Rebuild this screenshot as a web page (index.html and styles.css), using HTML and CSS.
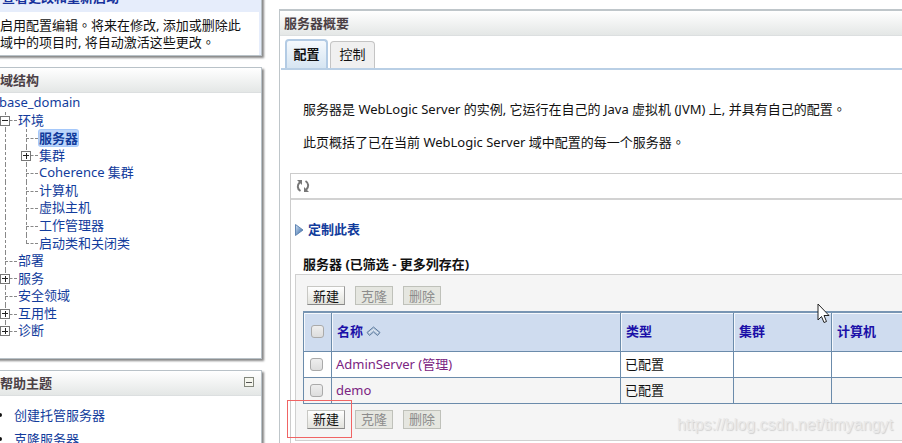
FILE: index.html
```html
<!DOCTYPE html>
<html lang="zh-CN">
<head>
<meta charset="utf-8">
<title>服务器概要</title>
<link rel="stylesheet" href="styles.css">
</head>
<body>
<div class="layout">
  <aside class="sidebar">
    <section class="panel changes">
      <h2>查看更改和重新启动</h2>
      <p>启用配置编辑。将来在修改, 添加或删除此域中的项目时, 将自动激活这些更改。</p>
    </section>
    <section class="panel domain">
      <h2 class="bar">域结构</h2>
      <ul class="tree">
        <li><a href="#">base_domain</a></li>
        <li><span class="joint"><button class="toggle" aria-label="折叠"></button></span><a href="#">环境</a></li>
        <li><span class="rail"></span><span class="joint"></span><a class="current" href="#">服务器</a></li>
        <li><span class="rail"></span><span class="joint"><button class="toggle plus" aria-label="展开"></button></span><a href="#">集群</a></li>
        <li><span class="rail"></span><span class="joint"></span><a href="#">Coherence 集群</a></li>
        <li><span class="rail"></span><span class="joint"></span><a href="#">计算机</a></li>
        <li><span class="rail"></span><span class="joint"></span><a href="#">虚拟主机</a></li>
        <li><span class="rail"></span><span class="joint"></span><a href="#">工作管理器</a></li>
        <li><span class="rail"></span><span class="joint end"></span><a href="#">启动类和关闭类</a></li>
        <li><span class="joint"></span><a href="#">部署</a></li>
        <li><span class="joint"><button class="toggle plus" aria-label="展开"></button></span><a href="#">服务</a></li>
        <li><span class="joint"></span><a href="#">安全领域</a></li>
        <li><span class="joint"><button class="toggle plus" aria-label="展开"></button></span><a href="#">互用性</a></li>
        <li><span class="joint end"><button class="toggle plus" aria-label="展开"></button></span><a href="#">诊断</a></li>
      </ul>
    </section>
    <section class="panel help">
      <h2 class="bar">帮助主题 <button class="collapse" aria-label="折叠"></button></h2>
      <ul class="topics">
        <li><a href="#">创建托管服务器</a></li>
        <li><a href="#">克隆服务器</a></li>
      </ul>
    </section>
  </aside>

  <main class="content">
    <h1 class="bar">服务器概要</h1>
    <nav class="tabs">
      <a class="tab active" href="#">配置</a>
      <a class="tab" href="#">控制</a>
    </nav>
    <div class="intro">
      <p>服务器是 WebLogic Server 的实例, 它运行在自己的 Java 虚拟机 (JVM) 上, 并具有自己的配置。</p>
      <p>此页概括了已在当前 WebLogic Server 域中配置的每一个服务器。</p>
    </div>
    <section class="report">
      <div class="tools">
        <button class="refresh" aria-label="刷新">
          <svg width="14" height="14" viewBox="0 0 14 14" fill="none" stroke="#777" stroke-width="2"><path d="M4.500 12C1 10 1 6 4 3"/><path d="M1 1H6V6Z" fill="#777" stroke="none"/><path d="M9.500 2C13 4 13 8 10 11"/><path d="M13 13H8V8Z" fill="#777" stroke="none"/></svg>
        </button>
      </div>
      <a class="customize" href="#">
        <svg width="9" height="14" viewBox="0 0 9 14"><defs><linearGradient id="arrow" x2="1" y2="1"><stop stop-color="#d5e5f7"/><stop offset="1" stop-color="#255b9c"/></linearGradient></defs><path d="M.5 1.5L8 7L.5 12.5Z" fill="url(#arrow)" stroke="#6286b3"/></svg>
        定制此表
      </a>
      <h2 class="caption">服务器 (已筛选 - 更多列存在)</h2>
      <div class="box">
        <div class="actions"><button>新建</button><button disabled>克隆</button><button disabled>删除</button></div>
        <table>
          <colgroup><col class="c-check"><col class="c-name"><col class="c-type"><col class="c-cluster"><col></colgroup>
          <thead>
            <tr>
              <th><input type="checkbox" aria-label="全选"></th>
              <th>名称 <svg class="sort" width="15" height="11" viewBox="0 0 15 11"><path d="M1 6.500L7.500 1L14 6.500L11.500 9.500L7.500 6L3.500 9.500Z" fill="#b4c6dc" stroke="#5f7c9f"/><path d="M3 7L7.500 3.500L12 7" fill="none" stroke="#eef4fb"/></svg></th>
              <th>类型</th><th>集群</th><th>计算机</th>
            </tr>
          </thead>
          <tbody>
            <tr><td><input type="checkbox" aria-label="AdminServer"></td><td><a href="#">AdminServer (管理)</a></td><td>已配置</td><td></td><td></td></tr>
            <tr><td><input type="checkbox" aria-label="demo"></td><td><a href="#">demo</a></td><td>已配置</td><td></td><td></td></tr>
          </tbody>
        </table>
        <div class="actions lower"><button>新建</button><button disabled>克隆</button><button disabled>删除</button></div>
      </div>
    </section>
  </main>
</div>
<div class="highlight"></div>
<svg class="pointer" width="14" height="21" viewBox="0 0 14 21"><path d="M1 1V17L4.500 13.500L7 19.500L9.500 18.500L7 12.500H12Z" fill="#fff" stroke="#222"/></svg>
<div class="watermark">https://blog.csdn.net/timyangyt</div>
</body>
</html>
```

FILE: styles.css
```css
* { box-sizing: border-box; }
body {
  margin: 0;
  height: 100vh;
  overflow: hidden;
  position: relative;
  background: #fff;
  color: #111;
  font: 13px/17px "Noto Sans", "Noto Sans CJK SC", sans-serif;
}
h1, h2, p, ul { margin: 0; padding: 0; font-size: 13px; }
ul { list-style: none; }
a { color: #123c9c; text-decoration: none; }
button { font: inherit; padding: 0; }

/* Full stops sit in the middle of their square */
p { font-family: "Noto Sans", "Noto Sans CJK TC", sans-serif; -webkit-locale: "zh-TW"; }

.layout { display: flex; align-items: flex-start; }

/* Left column, scrolled slightly past the window's edge */
.sidebar {
  flex: none;
  width: 270px;
  margin: -14px 17px 0 -8px;
  display: flex;
  flex-direction: column;
  gap: 11px;
}
.panel {
  border: 1px solid #b9c2c8;
  background: #fff;
  box-shadow: 2px 2px 2px #888;
}
.bar {
  height: 25px;
  padding: 0 7px;
  line-height: 25px;
  color: #4b4045;
  background: linear-gradient(#fff, #e4e7e6);
  border-bottom: 1px solid #dcdfe0;
}
.changes { background: #e6edfb; padding-right: 2px; }
.changes h2 { height: 25px; line-height: 21px; padding-left: 9px; color: #17329c; }
.changes p { background: #fff; padding: 5px 8px 4px 7px; height: 43px; }

.tree {
  display: grid;
  grid-auto-rows: 1fr;
  height: 246px;
  margin: 1px 0 18px 12px;
}
.tree li { display: flex; align-items: stretch; min-height: 0; }
.tree a { line-height: 17px; }
.tree li:first-child a { margin-left: -6px; }
.rail, .joint {
  flex: none;
  position: relative;
  background: repeating-linear-gradient(#888 0 3px, transparent 3px 5px) left top / 1px 100% no-repeat;
}
.rail { width: 21px; }
.joint { width: 13px; }
.joint.end { background-size: 1px 50%; }
.joint::before {
  content: "";
  position: absolute;
  top: 50%;
  left: 0;
  width: 12px;
  border-top: 1px dashed #888;
}
.toggle {
  position: absolute;
  left: -5px;
  top: 4px;
  width: 10px;
  height: 10px;
  border: 1px solid #777;
  background: linear-gradient(#222, #222) center / 6px 1px no-repeat, #fff;
}
.toggle.plus {
  background: linear-gradient(#222, #222) center / 6px 1px no-repeat,
    linear-gradient(#222, #222) center / 1px 6px no-repeat, #fff;
}
.tree .current {
  align-self: center;
  line-height: 16px;
  font-weight: bold;
  background: #bcd6fb;
  border-radius: 2px;
  box-shadow: 0 0 0 1px #a5c8fa;
}

.help .bar { display: flex; justify-content: space-between; }
.collapse {
  width: 10px;
  height: 10px;
  margin-top: 6px;
  border: 1px solid #83877c;
  background: linear-gradient(#555, #555) center / 6px 1px no-repeat, #f5f6ee;
}
.topics { padding: 7px 0 0 21px; }
.topics li { height: 24px; line-height: 24px; position: relative; }
.topics li::before {
  content: "";
  position: absolute;
  left: -16px;
  top: 10px;
  width: 4px;
  height: 4px;
  border-radius: 50%;
  background: #111;
}

/* Main column */
.content {
  flex: 1;
  min-width: 0;
  min-height: 100vh;
  margin-top: 9px;
  border: solid #bfc6ca;
  border-width: 2px 0 0 1px;
}
.content .bar { padding: 0 4px; }
.tabs {
  display: flex;
  align-items: flex-end;
  gap: 2px;
  height: 34px;
  padding-left: 4px;
  margin-left: 1px;
  border-bottom: 2px solid #b9cfe5;
}
.tab {
  height: 27px;
  line-height: 25px;
  width: 45px;
  text-align: center;
  color: #111;
  background: #f0f0f0;
  border: 1px solid #c4c4c4;
  border-bottom: 0;
  border-radius: 4px 4px 0 0;
}
.tab.active {
  height: 29px;
  width: 43px;
  line-height: 27px;
  font-weight: bold;
  background: linear-gradient(#f5f9fd, #d6e5f2);
  border: 2px solid #b3cbe4;
  border-bottom: 0;
}
.intro { padding: 31px 0 0 23px; }
.intro p { margin-bottom: 16px; line-height: 17px; white-space: nowrap; }

.report { margin: 22px 0 0 10px; border: solid #ccc; border-width: 1px 0 0 1px; min-height: 280px; }
.tools { height: 26px; border-bottom: 2px solid #d2d2d2; padding: 5px; }
.refresh { display: block; width: 14px; height: 14px; border: 0; background: none; }
.refresh svg { display: block; }
.customize { display: flex; align-items: center; gap: 4px; margin: 21px 0 0 4px; font-weight: bold; }
.caption { margin: 18px 0 1px 12px; line-height: 17px; }
.box { margin-left: 4px; padding: 11px 0 11px 7px; background: #f5f5f5; border: 1px solid #d0d0d0; border-right: 0; }

.actions { display: flex; gap: 10px; padding-left: 4px; margin-bottom: 6px; }
.actions.lower { margin: 6px 0 0; }
.actions button {
  width: 38px;
  height: 19px;
  line-height: 16px;
  color: #111;
  border: 1px solid #c8c8c4;
  border-right-color: #999;
  border-bottom-color: #888;
  background: linear-gradient(#fff, #e2e2dc);
}
.actions button:disabled { color: #8c8c8c; border-color: #bfc1ba; background: #e5e6e0; }

table { width: 100%; table-layout: fixed; border-collapse: collapse; border-top: 2px solid #7895b3; }
.c-check { width: 28px; }
.c-name { width: 289px; }
.c-type { width: 113px; }
.c-cluster { width: 98px; }
th, td { height: 26px; padding: 0 4px; text-align: left; border: 1px solid #6b8bab; }
th { height: 39px; padding-left: 5px; color: #1b10a8; background: #cfdcef; box-shadow: inset 1px 1px #f5f8fc; }
tr > :last-child { border-right: 0; }
tbody tr { background: #fff; }
tbody tr:nth-child(even) { background: #f5f5f5; }
td a { color: #7b2482; }
.sort { vertical-align: -1px; }
input[type="checkbox"] {
  appearance: none;
  display: block;
  width: 13px;
  height: 13px;
  margin: 0 0 0 2px;
  border: 1px solid #aaa;
  border-radius: 3px;
  background: linear-gradient(#eee, #ddd);
}

/* Annotations lying over the page */
.highlight { position: absolute; left: 287px; top: 400px; width: 65px; height: 38px; border: 1px solid #f06464; }
.pointer { position: absolute; left: 817px; top: 303px; }
.watermark {
  position: absolute;
  right: 9px;
  bottom: 8px;
  font: 16px/20px "Liberation Sans", sans-serif;
  color: #e9e9e9;
  text-shadow: 1px 1px 1px #d0d0d0;
}
```
